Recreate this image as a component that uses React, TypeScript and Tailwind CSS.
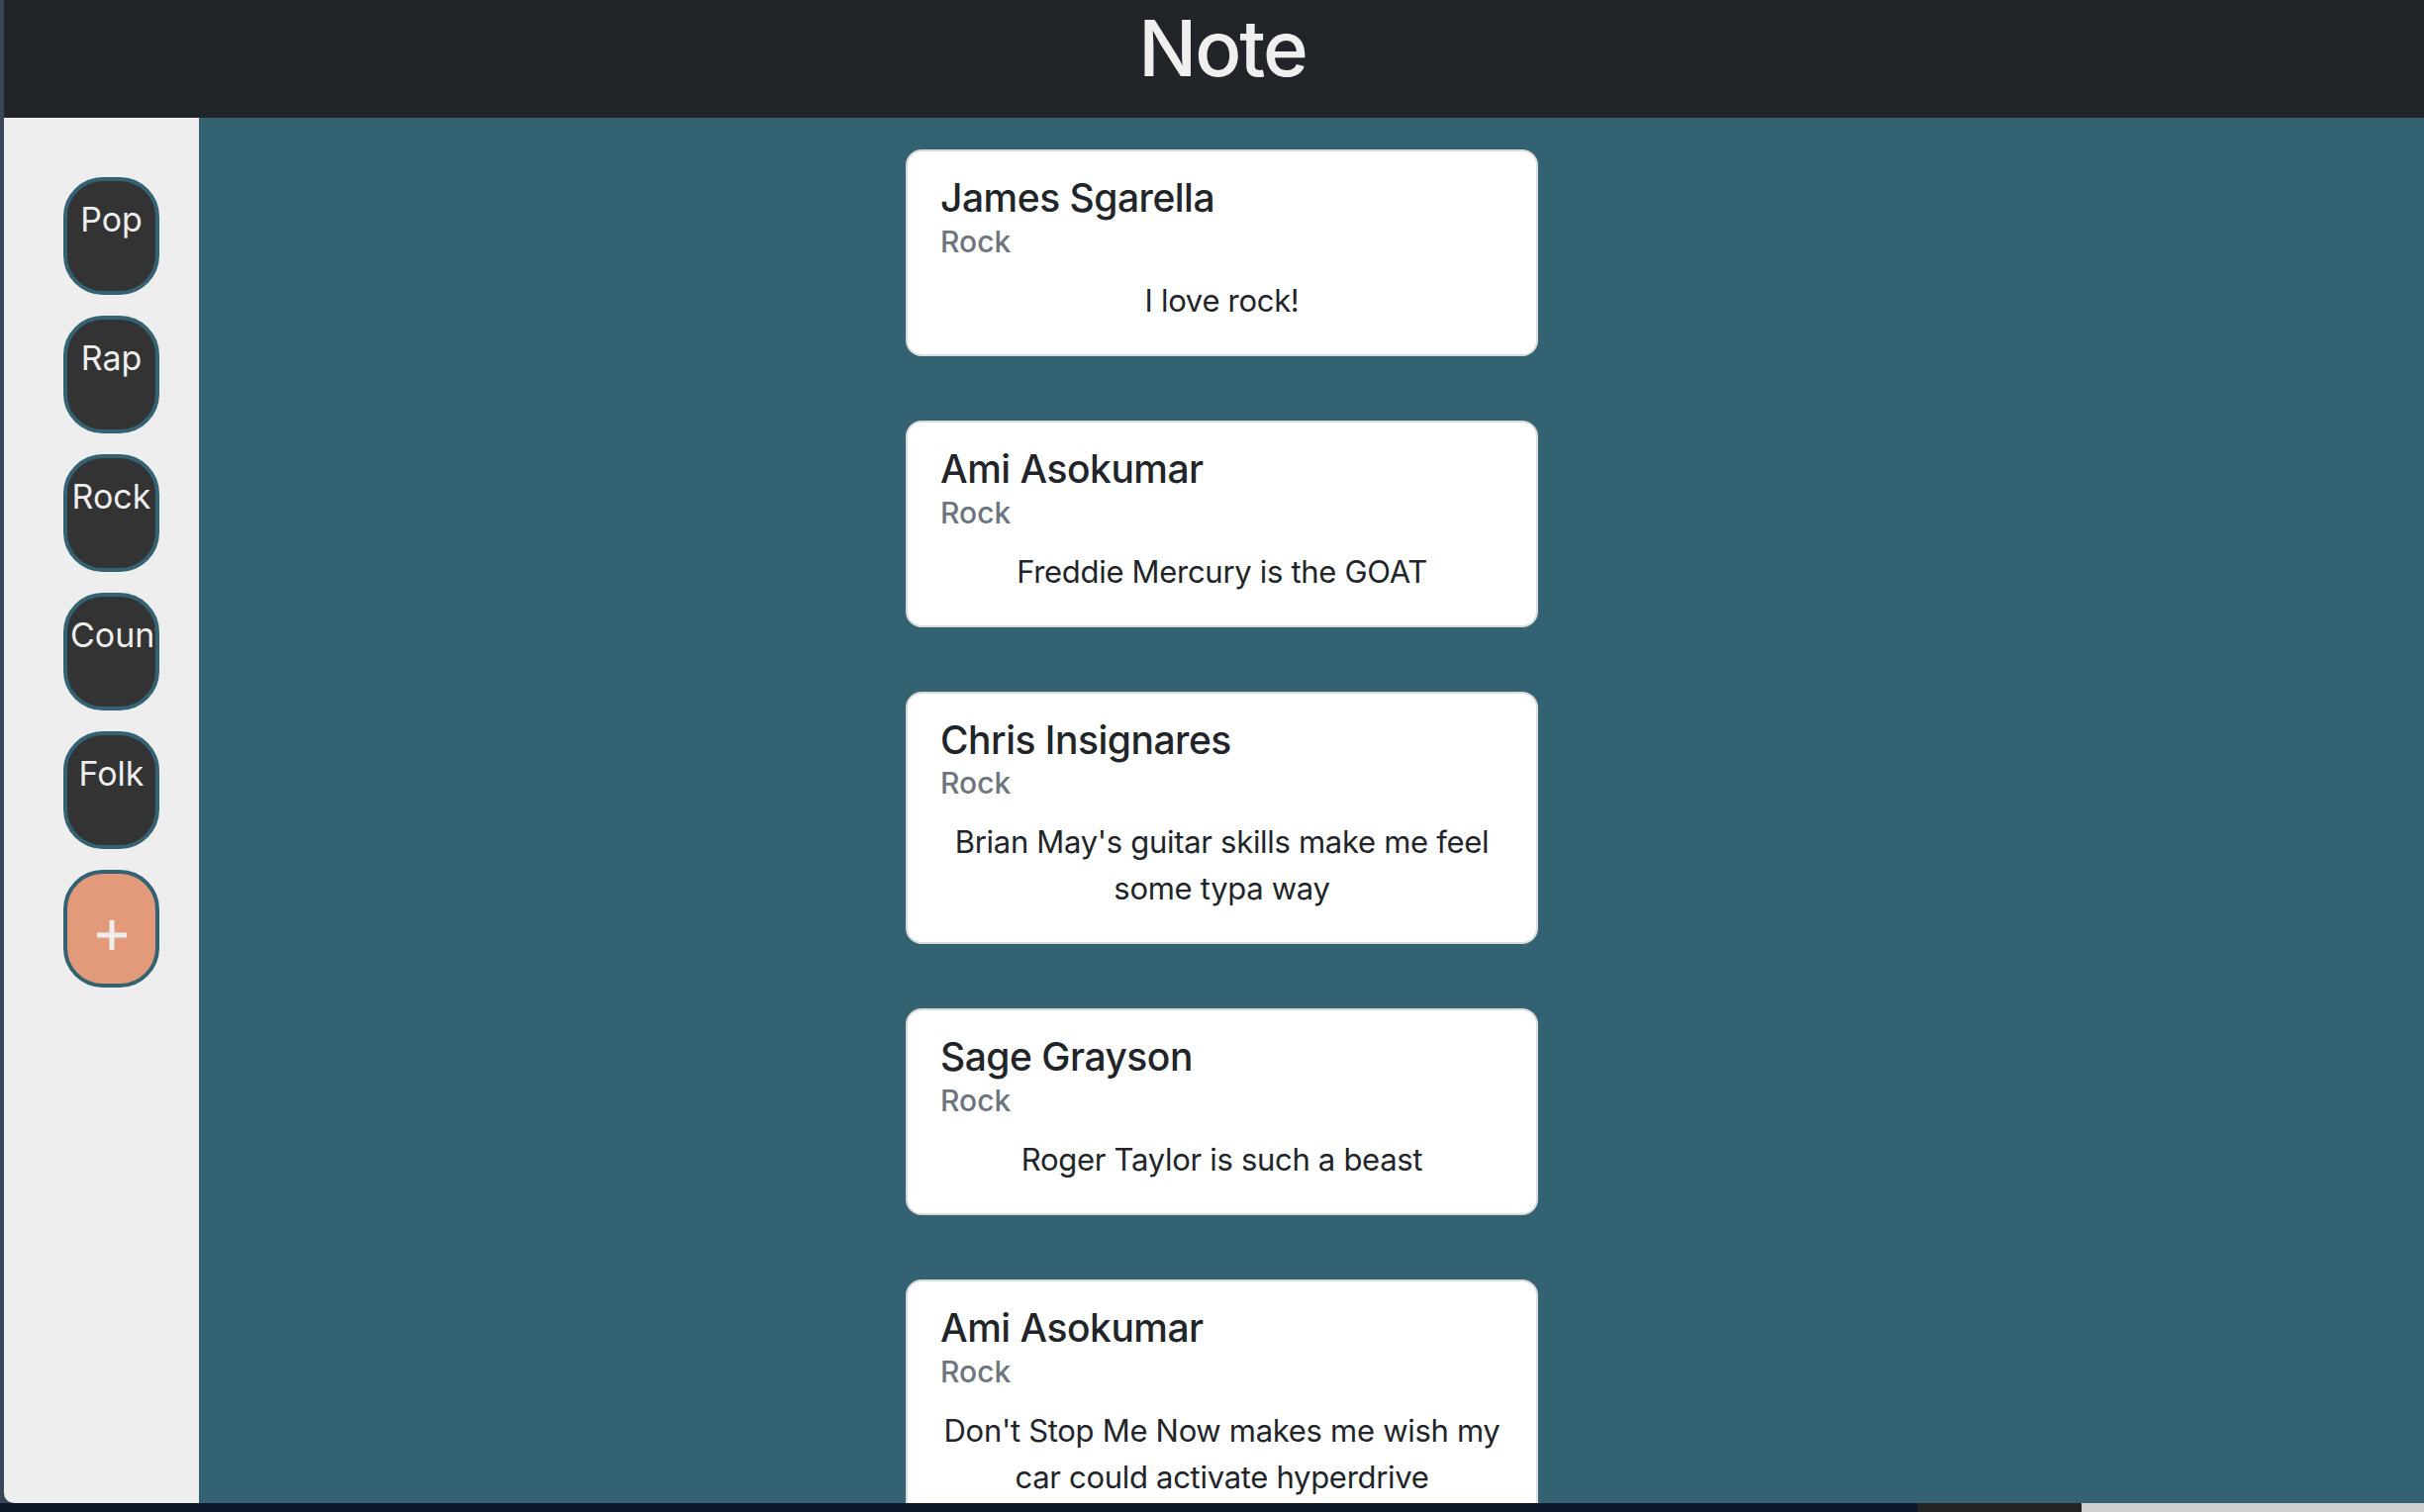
import React from 'react'

const genres = ['Pop', 'Rap', 'Rock', 'Country', 'Folk']

const notes = [
  { name: 'James Sgarella', genre: 'Rock', text: 'I love rock!' },
  { name: 'Ami Asokumar', genre: 'Rock', text: 'Freddie Mercury is the GOAT' },
  { name: 'Chris Insignares', genre: 'Rock', text: "Brian May's guitar skills make me feel some typa way" },
  { name: 'Sage Grayson', genre: 'Rock', text: 'Roger Taylor is such a beast' },
  { name: 'Ami Asokumar', genre: 'Rock', text: "Don't Stop Me Now makes me wish my car could activate hyperdrive" },
]

function GenreButton({ label }: { label: string }) {
  return (
    <div className="h-[119px] w-[97px] shrink-0 overflow-hidden rounded-[40px] border-4 border-[#336272] bg-[#333333] px-[3px] pt-[13px]">
      <span className="block whitespace-nowrap text-center text-[34px] leading-[51px] text-[#eeeeee]">{label}</span>
    </div>
  )
}

function AddButton() {
  return (
    <div className="flex h-[119px] w-[97px] shrink-0 justify-center rounded-[40px] border-4 border-[#336272] bg-[#e39a7a] pt-[47px]">
      <svg width="30" height="30" viewBox="0 0 30 30" className="block">
        <rect x="0" y="12.5" width="30" height="5" fill="#eeeeee" />
        <rect x="12.5" y="0" width="5" height="30" fill="#eeeeee" />
      </svg>
    </div>
  )
}

function NoteCard({ name, genre, text }: { name: string; genre: string; text: string }) {
  return (
    <div className="w-[639px] shrink-0 rounded-[16px] border-2 border-[#d9d9d9] bg-white px-[33px] pb-[31px] pt-[24px]">
      <h5 className="text-[39px] font-medium leading-[46.8px] tracking-[-0.5px] text-[#212529]">{name}</h5>
      <h6 className="mt-[2px] text-[30px] font-medium leading-[36px] text-[#6c757d]">{genre}</h6>
      <p className="-mx-[4px] mt-[18px] text-center text-[31px] leading-[47px] tracking-[-0.3px] text-[#212529]">{text}</p>
    </div>
  )
}

export default function App() {
  return (
    <div className="flex h-[1528px] w-full flex-col overflow-hidden bg-[#0c1828] font-['Inter','Noto_Sans',sans-serif]">
      <div className="flex h-[1519px] shrink-0 bg-[#3a4658] pl-[4px]">
        <div className="flex min-w-0 flex-1 flex-col overflow-hidden rounded-bl-[10px]">
          <header className="flex h-[119px] shrink-0 justify-center bg-[#212529] pl-[17px] pt-[10px]">
            <h1 className="text-[78px] font-medium leading-[78px] tracking-[-2px] text-[#efefef]">Note</h1>
          </header>
          <div className="flex min-h-0 flex-1">
            <aside className="flex w-[197px] shrink-0 flex-col gap-[21px] bg-[#eeeeee] pl-[60px] pt-[60px]">
              {genres.map((g) => (
                <GenreButton key={g} label={g} />
              ))}
              <AddButton />
            </aside>
            <main className="flex min-w-0 flex-1 flex-col items-center gap-[65px] overflow-hidden bg-[#336272] pr-[181px] pt-[32px]">
              {notes.map((n, i) => (
                <NoteCard key={i} {...n} />
              ))}
            </main>
          </div>
        </div>
      </div>
      <div className="flex h-[9px] shrink-0">
        <div className="flex-1 bg-[#0c1828]" />
        <div className="w-[166px] bg-[#242424]" />
        <div className="w-[346px] bg-[#cfcfcf]" />
      </div>
    </div>
  )
}
